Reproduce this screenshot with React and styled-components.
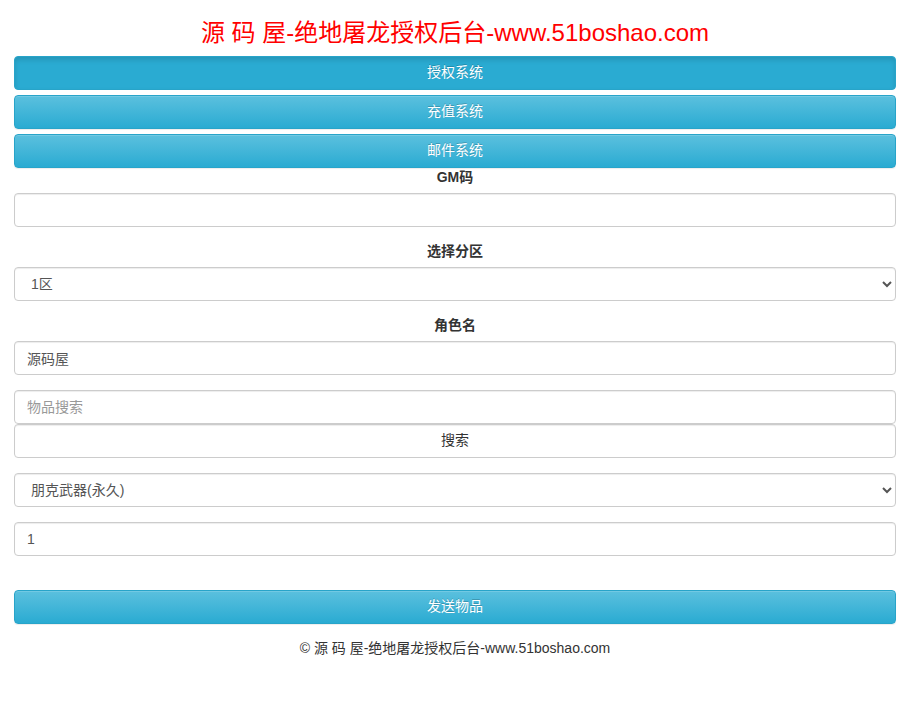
import React, { useState } from 'react';
import styled, { createGlobalStyle } from "styled-components";

const GlobalStyle = createGlobalStyle`
  * { box-sizing: border-box; }
  body {
    margin: 0;
    background: #fff;
    color: #333;
    font-family: "Liberation Sans", Arial, "Noto Sans CJK SC", sans-serif;
    font-size: 14px;
    line-height: 1.42857;
  }
`;

const Container = styled.div`
  width: 882px;
  margin: 0 auto 0 14px;
`;

const Title = styled.h3`
  margin: 20px 0 10px;
  font-size: 24px;
  font-weight: 400;
  line-height: 1.1;
  text-align: center;
  color: #ff0000;
`;

const Nav = styled.div`
  display: flex;
  flex-direction: column;
  gap: 5px;
`;

const InfoButton = styled.button`
  display: block;
  width: 100%;
  height: 34px;
  padding: 6px 12px;
  font: inherit;
  color: #fff;
  text-shadow: 0 -1px 0 rgba(0, 0, 0, 0.2);
  border: 1px solid #28a4c9;
  border-radius: 4px;
  cursor: pointer;
  background: ${({ $active }) =>
    $active ? "#2aabd2" : "linear-gradient(to bottom, #5bc0de 0, #2aabd2 100%)"};
  box-shadow: ${({ $active }) =>
    $active
      ? "inset 0 3px 5px rgba(0, 0, 0, 0.125)"
      : "inset 0 1px 0 rgba(255, 255, 255, 0.15), 0 1px 1px rgba(0, 0, 0, 0.075)"};
`;

const Form = styled.form`
  margin: 0;
`;

const Group = styled.div`
  margin-bottom: ${({ $tight }) => ($tight ? "0" : "15px")};
`;

const Label = styled.label`
  display: block;
  margin-bottom: 5px;
  font-weight: 700;
  text-align: center;
`;

const fieldCss = `
  display: block;
  width: 100%;
  height: 34px;
  padding: 6px 12px;
  font: inherit;
  font-size: 14px;
  color: #555;
  background: #fff;
  border: 1px solid #ccc;
  border-radius: 4px;
  box-shadow: inset 0 1px 1px rgba(0, 0, 0, 0.075);
  outline: none;
`;

const Input = styled.input`
  ${fieldCss}
  &::placeholder { color: #999; }
`;

const Select = styled.select`
  ${fieldCss}
`;

const PlainButton = styled.button`
  ${fieldCss}
  color: #333;
  text-align: center;
  cursor: pointer;
`;

const Spacer = styled.div`
  height: 19px;
`;

const Footer = styled.p`
  margin: 15px 0 0;
  text-align: center;
  color: #333;
`;

const systems = ["授权系统", "充值系统", "邮件系统"];

const App = () => {
  const [active, setActive] = useState(0);
  const [gm, setGm] = useState("");
  const [zone, setZone] = useState("1");
  const [role, setRole] = useState("源码屋");
  const [search, setSearch] = useState("");
  const [item, setItem] = useState("punk");
  const [count, setCount] = useState("1");

  return (
    <>
      <GlobalStyle />
      <Container>
        <Title>源 码 屋-绝地屠龙授权后台-www.51boshao.com</Title>
        <Nav>
          {systems.map((name, i) => (
            <InfoButton key={name} $active={i === active} onClick={() => setActive(i)}>
              {name}
            </InfoButton>
          ))}
        </Nav>
        <Form onSubmit={(e) => e.preventDefault()}>
          <Group>
            <Label>GM码</Label>
            <Input value={gm} onChange={(e) => setGm(e.target.value)} />
          </Group>
          <Group>
            <Label>选择分区</Label>
            <Select value={zone} onChange={(e) => setZone(e.target.value)}>
              <option value="1">1区</option>
              <option value="2">2区</option>
            </Select>
          </Group>
          <Group>
            <Label>角色名</Label>
            <Input value={role} onChange={(e) => setRole(e.target.value)} />
          </Group>
          <Group $tight>
            <Input
              placeholder="物品搜索"
              value={search}
              onChange={(e) => setSearch(e.target.value)}
            />
          </Group>
          <Group>
            <PlainButton type="button">搜索</PlainButton>
          </Group>
          <Group>
            <Select value={item} onChange={(e) => setItem(e.target.value)}>
              <option value="punk">朋克武器(永久)</option>
            </Select>
          </Group>
          <Group>
            <Input value={count} onChange={(e) => setCount(e.target.value)} />
          </Group>
          <Spacer />
          <InfoButton type="submit">发送物品</InfoButton>
        </Form>
        <Footer>© 源 码 屋-绝地屠龙授权后台-www.51boshao.com</Footer>
      </Container>
    </>
  );
};

export default App;
